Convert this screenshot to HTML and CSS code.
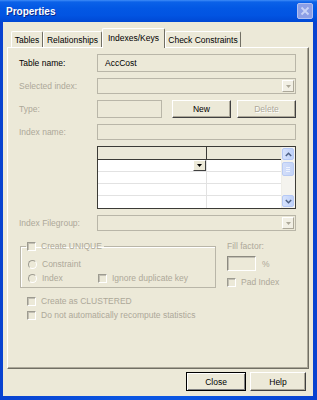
FILE: index.html
```html
<!DOCTYPE html>
<html lang="en">
<head>
    <meta charset="UTF-8">
    <title>Properties</title>
    <link rel="stylesheet" href="styles.css">
</head>
<body>
<div class="window">
    <div class="titlebar">
        <span class="title">Properties</span>
        <span class="close-x">
            <svg width="14" height="14" viewBox="0 0 14 14"><path d="M3.5 3.5l7 7M10.5 3.5l-7 7" stroke="#c9d3f6" stroke-width="1.8" fill="none"/></svg>
        </span>
    </div>
    <div class="client">
        <div class="tabs">
            <div class="tab t1">Tables</div>
            <div class="tab t2">Relationships</div>
            <div class="tab t3 active">Indexes/Keys</div>
            <div class="tab t4">Check Constraints</div>
        </div>
        <div class="panel">
            <div class="form">
                <span class="lbl">Table name:</span>
                <div class="box">AccCost</div>

                <span class="lbl off">Selected index:</span>
                <div class="box combo"><span class="drop"><svg width="5" height="3" viewBox="0 0 5 3"><path d="M0 0h5L2.5 3z" fill="#aca899"/></svg></span></div>

                <span class="lbl off">Type:</span>
                <div class="type-row">
                    <div class="box type-box"></div>
                    <div class="btn new-btn">New</div>
                    <div class="btn del-btn off">Delete</div>
                </div>

                <span class="lbl off">Index name:</span>
                <div class="box"></div>

                <span></span>
                <div class="grid">
                    <div class="grid-table">
                        <div class="grid-row head"><div class="c1"></div><div class="c2"></div></div>
                        <div class="grid-row"><div class="c1"><span class="cell-drop"><svg width="5" height="3" viewBox="0 0 5 3"><path d="M0 0h5L2.5 3z" fill="#000"/></svg></span></div><div class="c2"></div></div>
                        <div class="grid-row"><div class="c1"></div><div class="c2"></div></div>
                        <div class="grid-row"><div class="c1"></div><div class="c2"></div></div>
                        <div class="grid-row"><div class="c1"></div><div class="c2"></div></div>
                    </div>
                    <div class="vscroll">
                        <div class="sb-btn"><svg width="7" height="5" viewBox="0 0 7 5"><path d="M0.8 4L3.5 1.3 6.2 4" stroke="#4d6185" stroke-width="1.5" fill="none"/></svg></div>
                        <div class="sb-thumb"><i></i><i></i><i></i></div>
                        <div class="sb-track"></div>
                        <div class="sb-btn"><svg width="7" height="5" viewBox="0 0 7 5"><path d="M0.8 1L3.5 3.7 6.2 1" stroke="#4d6185" stroke-width="1.5" fill="none"/></svg></div>
                    </div>
                </div>

                <span class="lbl off">Index Filegroup:</span>
                <div class="box combo"><span class="drop"><svg width="5" height="3" viewBox="0 0 5 3"><path d="M0 0h5L2.5 3z" fill="#aca899"/></svg></span></div>
            </div>

            <div class="options">
                <fieldset class="group">
                    <legend class="opt off"><span class="chk"></span>Create UNIQUE</legend>
                    <div class="opt off"><span class="radio"></span>Constraint</div>
                    <div class="opt-line">
                        <div class="opt off idx"><span class="radio"></span>Index</div>
                        <div class="opt off"><span class="chk"></span>Ignore duplicate key</div>
                    </div>
                </fieldset>
                <div class="fill">
                    <span class="off">Fill factor:</span>
                    <div class="fill-row"><div class="sunken"></div><span class="off">%</span></div>
                    <div class="opt off"><span class="chk"></span>Pad Index</div>
                </div>
            </div>
            <div class="opt off wide first"><span class="chk"></span>Create as CLUSTERED</div>
            <div class="opt off wide"><span class="chk"></span>Do not automatically recompute statistics</div>
        </div>
        <div class="buttons">
            <div class="btn default">Close</div>
            <div class="btn help">Help</div>
        </div>
    </div>
</div>
</body>
</html>
```

FILE: styles.css
```css
* {
    margin: 0;
    padding: 0;
    box-sizing: border-box;
}

body {
    width: 317px;
    height: 400px;
    overflow: hidden;
    font-family: "Liberation Sans", Arial, sans-serif;
    font-size: 8.5px;
    color: #000;
    background: #fff;
}

.window {
    width: 317px;
    height: 400px;
    display: flex;
    flex-direction: column;
    background: linear-gradient(90deg, #0842d0, #0a55e2 40%, #0a55e2 60%, #0842d0);
}

.titlebar {
    height: 22px;
    flex: none;
    display: flex;
    align-items: center;
    justify-content: space-between;
    padding: 0 4px 0 6px;
    background: linear-gradient(#3f8cf7 0, #0b61e8 2px, #0358e4 8px, #0254e2 70%, #0048d4 100%);
}

.title {
    color: #fff;
    font-weight: bold;
    font-size: 10px;
    text-shadow: 1px 1px 0 #0a2a8a;
}

.close-x {
    width: 16px;
    height: 16px;
    display: flex;
    align-items: center;
    justify-content: center;
    background: #8c9fe6;
    border: 1px solid #b2c0f1;
    border-radius: 2px;
}

.client {
    flex: 1;
    margin: 0 4px 4px 3px;
    padding: 6px 4px 0 4px;
    background: #ece9d8;
    display: flex;
    flex-direction: column;
}

/* tabs */
.tabs {
    height: 19px;
    flex: none;
    display: flex;
    align-items: flex-end;
    padding-left: 4px;
    position: relative;
    z-index: 1;
}

.tab {
    height: 16px;
    display: flex;
    align-items: center;
    justify-content: center;
    border-top: 1px solid #fff;
    border-left: 1px solid #fff;
    border-right: 1px solid #716f64;
    border-radius: 2px 2px 0 0;
    background: #ece9d8;
}

.t1 { width: 32px; }
.t2 { width: 59px; }
.t3 { width: 63px; }
.t4 { width: 76px; }

.tab.active {
    height: 20px;
    margin-bottom: -1px;
    padding-bottom: 2px;
}

.panel {
    flex: 1;
    border-top: 1px solid #fff;
    border-left: 1px solid #fff;
    border-right: 1px solid #716f64;
    border-bottom: 1px solid #716f64;
    box-shadow: inset -1px -1px 0 #aca899;
    padding: 6px 12px 0 11px;
}

.off {
    color: #aca899;
}

/* form rows */
.form {
    display: grid;
    grid-template-columns: 78px 199px;
    grid-template-rows: 18px 16px 18px 16px 63px 16px;
    row-gap: 6px;
    align-items: center;
}

.form > * {
    height: 100%;
}

.lbl {
    display: flex;
    align-items: center;
}

.box {
    border: 1px solid #b9b6a8;
    background: #ece9d8;
    display: flex;
    align-items: center;
    padding-left: 7px;
}

.combo {
    justify-content: flex-end;
    padding: 1px;
}

.drop {
    width: 12px;
    height: 12px;
    display: flex;
    align-items: center;
    justify-content: center;
    border-top: 1px solid #fff;
    border-left: 1px solid #fff;
    border-right: 1px solid #aca899;
    border-bottom: 1px solid #aca899;
    background: #f1efe4;
}

.type-row {
    display: flex;
}

.type-box {
    width: 65px;
}

.btn {
    height: 18px;
    width: 59px;
    display: flex;
    align-items: center;
    justify-content: center;
    background: #ece9d8;
    border-top: 1px solid #fff;
    border-left: 1px solid #fff;
    border-right: 1px solid #404040;
    border-bottom: 1px solid #404040;
    box-shadow: inset -1px -1px 0 #aca899;
}

.new-btn {
    margin-left: 10px;
}

.del-btn {
    margin-left: 6px;
    text-shadow: 1px 1px 0 #fff;
}

/* grid */
.grid {
    display: flex;
    border: 1px solid #3c3b36;
    background: #fff;
}

.grid-table {
    flex: 1;
}

.grid-row {
    height: 12px;
    display: flex;
    border-bottom: 1px solid #e2e2e2;
}

.grid-row.head {
    height: 13px;
    background: #ece9d8;
    border-bottom: 1px solid #3c3b36;
}

.grid-row:last-child {
    border-bottom: 0;
}

.c1 {
    width: 109px;
    border-right: 1px solid #e2e2e2;
    display: flex;
    justify-content: flex-end;
}

.head .c1 {
    border-right: 1px solid #3c3b36;
}

.c2 {
    flex: 1;
}

.cell-drop {
    width: 13px;
    height: 11px;
    display: flex;
    align-items: center;
    justify-content: center;
    background: #ece9d8;
    border-top: 1px solid #fff;
    border-left: 1px solid #fff;
    border-right: 1px solid #404040;
    border-bottom: 1px solid #404040;
}

.vscroll {
    width: 14px;
    display: flex;
    flex-direction: column;
    background: #f4f3ee;
    border-left: 1px solid #efeee8;
}

.sb-btn {
    height: 12px;
    margin: 1px 1px 1px 0;
    display: flex;
    align-items: center;
    justify-content: center;
    background: linear-gradient(90deg, #d6e2fc, #bfd1f9);
    border: 1px solid #b6c9f5;
    border-radius: 2px;
}

.sb-thumb {
    height: 14px;
    margin: 1px 1px 0 0;
    display: flex;
    flex-direction: column;
    justify-content: center;
    gap: 1px;
    background: linear-gradient(90deg, #d3def9, #c4d4f8);
    border: 1px solid #b9cbf3;
    border-radius: 2px;
}

.sb-thumb i {
    height: 1px;
    margin: 0 3px;
    background: #eef3fe;
}

.sb-track {
    flex: 1;
}

/* options */
.options {
    display: flex;
    margin-top: 9px;
}

.group {
    width: 196px;
    margin-left: 1px;
    border: 1px solid #b9b6a8;
    box-shadow: inset 1px 1px 0 #fff;
    padding: 4px 0 3px 7px;
}

.group legend {
    margin-left: -2px;
    padding: 0 2px 0 1px;
    height: 12px;
}

.opt {
    display: flex;
    align-items: center;
    height: 12px;
    gap: 5px;
}

.group > .opt {
    margin-bottom: 2px;
}

.opt-line {
    display: flex;
}

.idx {
    width: 70px;
}

.chk {
    width: 9px;
    height: 9px;
    flex: none;
    border-top: 1px solid #9d9b90;
    border-left: 1px solid #9d9b90;
    border-right: 1px solid #fff;
    border-bottom: 1px solid #fff;
    box-shadow: inset 1px 1px 0 #c2bfb3;
    background: #ece9d8;
}

.radio {
    width: 9px;
    height: 9px;
    flex: none;
    border-radius: 50%;
    border: 1px solid;
    border-color: #9d9b90 #fff #fff #9d9b90;
    background: #ece9d8;
}

.fill {
    margin: 1px 0 0 11px;
    display: flex;
    flex-direction: column;
}

.fill > span {
    height: 12px;
}

.fill-row {
    display: flex;
    align-items: center;
    gap: 6px;
    margin-top: 3px;
}

.sunken {
    width: 29px;
    height: 15px;
    border-top: 1px solid #8c8a80;
    border-left: 1px solid #8c8a80;
    border-right: 1px solid #fff;
    border-bottom: 1px solid #fff;
    box-shadow: inset 1px 1px 0 #c2bfb3;
}

.fill .opt {
    margin-top: 5px;
}

.wide {
    margin-left: 8px;
    margin-top: 2px;
}

.wide.first {
    margin-top: 7px;
}

/* dialog buttons */
.buttons {
    flex: none;
    display: flex;
    justify-content: flex-end;
    gap: 4px;
    margin: 3px 3px 5px 0;
}

.buttons .btn {
    height: 19px;
    width: 56px;
}

.buttons .default {
    width: 60px;
    border: 1px solid #000;
    box-shadow: inset 1px 1px 0 #fff, inset -1px -1px 0 #808080;
}
```
